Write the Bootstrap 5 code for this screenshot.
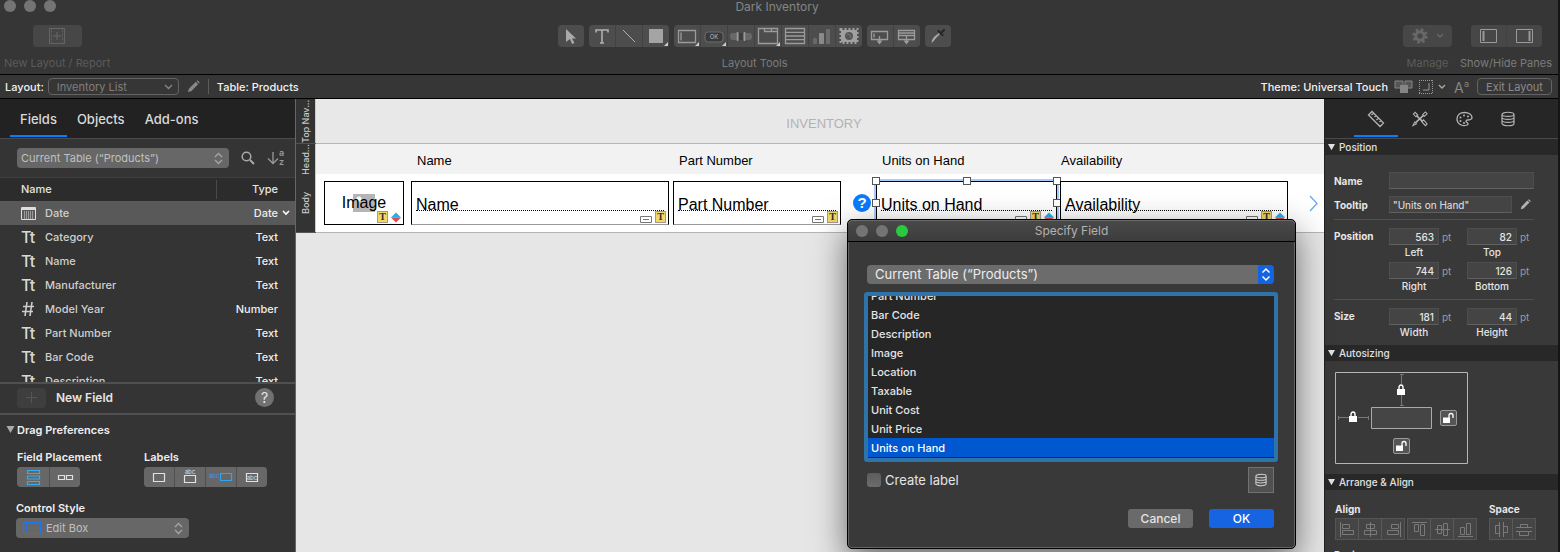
<!DOCTYPE html>
<html lang="en" data-bs-theme="dark">
<head>
<meta charset="utf-8">
<meta name="viewport" content="width=device-width, initial-scale=1">
<title>Dark Inventory</title>
<link href="https://cdn.jsdelivr.net/npm/bootstrap@5.3.0/dist/css/bootstrap.min.css" rel="stylesheet">
<style>
  body { font-family: Inter, "Liberation Sans", sans-serif; font-size: 11px; line-height: 16px; color: #e4e4e4; background: #363636; }
  svg { display: block; flex: none; overflow: visible; }
  button, input, select { font: inherit; color: inherit; }
  button { border: 0; padding: 0; }
  .shell { border-right: 2px solid #151515; }
  .ln { fill: none; stroke: currentColor; }

  /* window toolbar */
  .win-head { background: #363636; border-bottom: 1px solid #000; height: 75px; }
  .win-title { font-size: 12px; height: 13px; line-height: 13px; color: #858585; padding-right: 4px; }
  .dot { width: 12px; height: 12px; border-radius: 50%; background: #747474; }
  .dot.go { background: #29c940; }
  .tool-row { padding: 0 6px 0 4px; }
  .tools { height: 22px; margin-top: 12px; gap: 5px; }
  .seg { display: flex; gap: 1px; border-radius: 4px; overflow: hidden; background: #424242; }
  .seg button { width: 26px; height: 22px; background: #4d4d4d; color: #9b9b9b; display: flex; align-items: center; justify-content: center; }
  .seg .wide { width: 49px; }
  .seg .mid { width: 35px; }
  .tool-name { font-size: 11px; line-height: 16px; margin-top: 8px; color: #7b7b7b; }
  .off { color: #5b5b5b; }
  .seg.dim button { background: #474747; }

  /* layout bar */
  .lay-bar { height: 24px; border-bottom: 1px solid #000; font-weight: 500; color: #f2f2f2; padding: 0 6px 0 5px; }
  .lay-right { gap: 7px; }
  .lay-sel { width: 131px; height: 17px; border: 1px solid #646464; border-radius: 4px; color: #7f7f7f; font-weight: 400; line-height: 14px; padding: 0 20px 0 8px; appearance: none; background: url("data:image/svg+xml,%3Csvg xmlns='http://www.w3.org/2000/svg' width='9' height='6'%3E%3Cpath d='M1 1l3.500 3.500L8 1' fill='none' stroke='%23888' stroke-width='1.300'/%3E%3C/svg%3E") no-repeat right 5px center; }
  .exit { height: 17px; width: 75px; border: 1px solid #646464; border-radius: 4px; background: none; color: #8b8b8b; font-weight: 400; line-height: 14px; }
  .vline { width: 1px; height: 15px; background: #5c5c5c; }
  .pen { color: #888; }
  .pen-lit { color: #b4b4b4; }

  /* panes */
  .pane-l { width: 296px; background: #343434; border-right: 1px solid #666; flex: none; }
  .pane-tabs { height: 40px; background: #222; border-bottom: 1px solid #4a4a4a; }
  .pane-tabs button { background: none; border-bottom: 2px solid transparent; height: 38px; padding: 4px 10px 0; font-size: 13px; font-weight: 500; color: #dadada; }
  .pane-tabs button.active { border-color: #0a7aff; }
  .pane-l .pane-tabs { padding-left: 10px; }
  .find-row { height: 38px; padding-left: 17px; gap: 12px; }
  .mac-sel { appearance: none; border: 0; border-radius: 4px; height: 20px; color: #c0c0c0; padding: 0 20px 0 4px; background: #676767 url("data:image/svg+xml,%3Csvg xmlns='http://www.w3.org/2000/svg' width='9' height='13'%3E%3Cpath d='M1 5l3.500-3.500L8 5M1 8l3.500 3.500L8 8' fill='none' stroke='%23a5a5a5' stroke-width='1.300'/%3E%3C/svg%3E") no-repeat right 6px center; }
  .find-row .mac-sel { width: 212px; }
  .fld-wrap { height: 207px; border-top: 1px solid #3f3f3f; border-bottom: 2px solid #505050; overflow: hidden; }
  .fld { width: 100%; table-layout: fixed; }
  .fld th, .fld td { height: 24px; padding: 0; font-weight: 500; }
  .fld th { height: 23px; padding-bottom: 2px; }
  .fld th:first-child { padding-left: 21px; background: linear-gradient(#4a4a4a, #4a4a4a) no-repeat right center / 1px 19px; }
  .fld td { color: #cfcfcf; }
  .fld td:first-child svg { margin-left: 21px; fill: #d8d8d8; }
  .fld td:nth-child(n+3) { color: #ededed; }
  .fld thead tr { background: #2c2c2c; }
  .fld .sel { background: #595959; }
  .new-row { height: 31px; border-bottom: 2px solid #505050; padding: 0 21px 2px 17px; gap: 10px; }
  .plus { width: 29px; height: 20px; border-radius: 4px; background: #3e3e3e; color: #555; }
  .help { width: 19px; height: 19px; border-radius: 50%; background: #717171; color: #e8e8e8; font-size: 14px; line-height: 19px; }
  .pref { font-weight: 600; color: #efefef; }
  .seg2 { display: flex; gap: 1px; height: 20px; margin-top: 2px; border-radius: 4px; overflow: hidden; background: #505050; }
  .seg2 button { width: 30px; background: #676767; color: #e0e0e0; display: flex; align-items: center; justify-content: center; }
  .edit-sel { width: 173px; padding-left: 30px; }

  /* layout canvas */
  .canvas { background: #e6e6e6; color: #000; font-family: "Liberation Sans", Arial, sans-serif; }
  .part { display: grid; grid-template-columns: 20px minmax(0, 1fr); border-bottom: 1px solid #b5b5b5; }
  .part-tab { background: #333; color: #ccc; font: 500 9px/12px Inter, sans-serif; writing-mode: vertical-rl; transform: rotate(180deg); text-align: center; white-space: nowrap; display: flex; align-items: center; justify-content: center; border-left: 1px solid #ccc; box-shadow: 0 -1px #555; }
  .cols { display: grid; padding-left: 8px; grid-template-columns: minmax(0,80fr) 7px minmax(0,258fr) 4px minmax(0,168fr) 35px minmax(0,181fr) 3px minmax(0,228fr) 36px; }
  .c1 { grid-column: 1; } .c2 { grid-column: 3; } .c3 { grid-column: 5; } .c4 { grid-column: 7; } .c5 { grid-column: 9; }
  .p-nav { height: 45px; } .p-head { height: 30px; } .p-body { height: 59px; }
  .inv { color: #b3b3b3; font-size: 13px; background: #e8e8e8; padding: 6px 0 0 8px; }
  .p-head .cols { background: #f2f2f2; align-items: center; font-size: 13px; padding-top: 3px; }
  .p-head span { padding-left: 6px; }
  .p-head .c5 { padding-left: 1px; }
  .p-body .cols { background: #fff; padding-top: 7px; align-items: start; }
  .box { height: 44px; border: 1px solid #000; position: relative; padding: 14px 4px 0; font-size: 16px; line-height: 18px; }
  .box.c1 { padding-top: 12px; }
  .box.line { border-bottom-color: #999; }
  .box .rule { border-bottom: 1px dotted #000; height: 15px; white-space: nowrap; }
  .photo { position: absolute; left: 28px; top: 12px; }
  .marks { position: absolute; right: 2px; bottom: 1px; display: flex; gap: 3px; align-items: end; }
  .tmark { font: bold 10px/10px "Liberation Serif", serif; width: 11px; height: 12px; background: #f2d868; border: 1px solid #a98; text-align: center; color: #333; }
  .picked { outline: 2px solid #a9ccff; outline-offset: 0; }
  .tip-mark { grid-column: 6; margin: 13px 0 0 12px; }
  .more-mark { grid-column: 10; margin: 14px 0 0 21px; }
  .grip { position: absolute; width: 8px; height: 8px; border: 1px solid #555; background: #fff; }
  .g1 { left: -5px; top: -5px; } .g2 { left: calc(50% - 4px); top: -5px; } .g3 { right: -5px; top: -5px; } .g4 { left: -5px; top: 17px; } .g5 { right: -5px; top: 17px; }

  /* floating dialog */
  .dlg { position: absolute; left: 551px; top: 120px; width: 449px; background: #393939; border: 1px solid #000; border-radius: 5px; box-shadow: inset 0 0 0 1px #646464, 0 12px 34px rgba(0,0,0,.55); color: #e4e4e4; font-family: Inter, "Liberation Sans", sans-serif; }
  .dlg-head { height: 22px; border-bottom: 1px solid #000; border-radius: 5px 5px 0 0; background: linear-gradient(#4a4a4a, #3c3c3c); font-size: 12px; color: #b2b2b2; box-shadow: inset 0 1px #6a6a6a; }
  .dlg-body { padding: 23px 21px 20px 19px; }
  .dlg-sel { width: 100%; height: 19px; font-size: 13px; color: #ececec; padding: 0 24px 1px 8px; background: url("data:image/svg+xml,%3Csvg xmlns='http://www.w3.org/2000/svg' width='16' height='20'%3E%3Cpath fill='%231463e0' d='M0 0h16v20H0z'/%3E%3Cpath d='M4.500 8l3.500-3.500L11.500 8M4.500 12l3.500 3.500 3.500-3.500' fill='none' stroke='%23fff' stroke-width='1.500'/%3E%3C/svg%3E") no-repeat right center, #6c6c6c; }
  .pick { height: 170px; margin: 8px -4px 0 -3px; padding-bottom: 1px; border: 4px solid #2e74aa; border-radius: 3px; background: #262626; overflow: hidden; font-weight: 500; }
  .pick button { height: 19px; flex: none; background: none; text-align: left; padding: 0 3px; }
  .pick button.active { background: #0058d0; color: #fff; }
  .tick { appearance: none; width: 14px; height: 14px; border-radius: 3px; background: linear-gradient(#5c5c5c, #6c6c6c); margin: 0 4px 0 0; }
  .opt-row { padding-top: 5px; font-size: 13px; }
  .act-row { padding-top: 16px; gap: 16px; }
  .lg { font-size: 12px; font-weight: 600; }
  .db { width: 26px; height: 26px; background: #505050; border: 1px solid #727272; color: #d0d0d0; }
  .act { width: 65px; height: 19px; border-radius: 3px; background: #6a6a6a; font-size: 12px; font-weight: 500; line-height: 19px; }
  .act.ok { background: #1664e2; color: #fff; }

  /* inspector */
  .pane-r { width: 234px; background: #393939; flex: none; border-left: 1px solid #222; }
  .pane-r .pane-tabs { padding-left: 29px; background: #262626; }
  .pane-r .pane-tabs button { width: 44px; padding: 4px 0 0; color: #b4b4b4; display: flex; align-items: center; justify-content: center; }
  .sec { height: 16px; background: #282828; padding-left: 3px; gap: 4px; color: #e0e0e0; font-size: 10px; font-weight: 500; }
  .lab { width: 55px; flex: none; font-size: 10px; font-weight: 700; color: #e6e6e6; }
  .in { height: 17px; background: #444; border: 1px solid #4e4e4e; border-bottom-color: #606060; font-size: 10px; line-height: 15px; color: #e4e4e4; padding: 0 4px; border-radius: 0; min-width: 0; }
  .tipbox { width: 123px; padding-left: 3px; }
  .num { width: 50px; text-align: right; }
  .cell { width: 78px; flex: none; font-size: 10px; font-weight: 500; line-height: 14px; }
  .cell label { display: block; width: 50px; text-align: center; }
  .unit { color: #999; margin-left: 3px; font-weight: 400; }
  .insp { padding: 17px 24px 6px 9px; }
  .split { border-top: 1px solid #505050; margin: 6px 0 8px; }
  .auto { padding: 11px 0 10px 10px; }
  .arr { padding: 11px 0 0 10px; }
  .arr-main { width: 154px; }
  .grp { display: flex; gap: 1px; background: #5a5a5a; border: 1px solid #555; }
  .grp button { width: 22px; height: 20px; background: #454545; color: #7a7a7a; display: flex; align-items: center; justify-content: center; }
</style>
</head>
<body>
<svg width="0" height="0" class="position-absolute" aria-hidden="true">
  <symbol id="pencil" viewBox="0 0 14 14"><path d="M1 13l1-3.500L9.500 2 12 4.500 4.500 12zM10.300 1.200l1-1 2.500 2.500-1 1z" fill="currentColor"/></symbol>
  <symbol id="dbase" viewBox="0 0 14 16"><path class="ln" stroke-width="1.200" d="M1 3.500C1 .5 13 .5 13 3.500v9c0 3-12 3-12 0zM1 3.500c0 2.500 12 2.500 12 0M1 6.500c0 2.500 12 2.500 12 0M1 9.500c0 2.500 12 2.500 12 0"/></symbol>
  <symbol id="gem" viewBox="0 0 10 10"><path d="M0 5l5-5 5 5z" fill="#27aee8"/><path d="M0 5l5 5 5-5z" fill="#e0494d"/></symbol>
  <symbol id="fieldmark" viewBox="0 0 12 7"><path d="M.5.5h11v6H.5zM3 3.500h6" fill="#fff" stroke="#777"/></symbol>
  <symbol id="tri" viewBox="0 0 8 8"><path d="M0 0h8L4 7z" fill="currentColor"/></symbol>
  <symbol id="lock" viewBox="0 0 8 12"><path d="M2 6V3.500a2 2.500 0 0 1 4 0V6" fill="none" stroke="#fff" stroke-width="1.400"/><path d="M0 5h8v6H0z" fill="#fff"/></symbol>
  <symbol id="unlock" viewBox="0 0 17 16"><rect x=".5" y=".5" width="16" height="15" rx="1.500" fill="#555" stroke="#999"/><path d="M3 7.500h7V13H3z" fill="#fff"/><path d="M9 8V5.500a2 2 0 0 1 4 0V8" fill="none" stroke="#fff" stroke-width="1.300"/></symbol>
</svg>

<div class="shell vh-100 overflow-hidden d-flex flex-column">
  <header class="win-head flex-shrink-0">
    <div class="win-title position-relative text-center">
      <div class="position-absolute top-0 start-0 d-flex gap-2 ps-1"><span class="dot"></span><span class="dot"></span><span class="dot"></span></div>
      <span>Dark Inventory</span>
    </div>
    <div class="tool-row d-flex justify-content-between">
      <div class="d-flex flex-column align-items-center">
        <div class="tools d-flex"><div class="seg dim"><button aria-label="New layout" class="wide"><svg width="16" height="16"><path d="M.5.500h15v15H.5z" fill="none" stroke="#656565"/><path d="M2.500 1v14M13.500 1v14" stroke="#656565" stroke-dasharray="1 1"/><path d="M8 4v8M4 8h8" stroke="#696969"/></svg></button></div></div>
        <div class="tool-name off">New Layout / Report</div>
      </div>
      <div class="d-flex flex-column align-items-center">
        <div class="tools d-flex">
          <div class="seg"><button aria-label="Select"><svg width="12" height="15"><path d="M1 0l10 9.500H7l2.500 4.500-2.500 1-2-5-4 3z" fill="#aaa"/></svg></button></div>
          <div class="seg">
            <button aria-label="Text"><svg width="14" height="15"><path d="M1 3.500V1h12v2.500M7 1v13M5 14h4" fill="none" stroke="#b0b0b0" stroke-width="1.600"/></svg></button>
            <button aria-label="Line"><svg width="14" height="14"><path d="M1 1l12 12" stroke="#b0b0b0"/></svg></button>
            <button aria-label="Shape"><svg width="24" height="20"><path d="M5 3h14v14H5z" fill="#a4a4a4"/><path d="M24 16v4h-4z" fill="#ccc"/></svg></button>
          </div>
          <div class="seg">
            <button aria-label="Field"><svg width="24" height="20"><path class="ln" stroke-width="1.300" d="M3.500 4.500h17v12h-17zM6 6.500v8"/><path d="M24 16v4h-4z" fill="#ccc"/></svg></button>
            <button aria-label="Button"><svg width="24" height="20"><rect x="3" y="6" width="18" height="10" rx="3" fill="#3a3a3a" stroke="#6c6c6c"/><text x="12" y="13" font-size="6" text-anchor="middle" fill="#bbb">OK</text><path d="M24 16v4h-4z" fill="#ccc"/></svg></button>
            <button aria-label="Button bar"><svg width="24" height="20"><rect x="1" y="7" width="22" height="7" rx="3" fill="#686868"/><path d="M10 7h4v7h-4z" fill="#3e3e3e"/><path d="M8.500 6v9M15.500 6v9" stroke="#999" stroke-width="1.500"/></svg></button>
            <button aria-label="Tab control"><svg width="24" height="20"><path class="ln" stroke-width="1.300" d="M2.500 2.500h19v15h-19zM8.500 2.500v3h13M15.500 2.500v3"/><path d="M24 16v4h-4z" fill="#ccc"/></svg></button>
            <button aria-label="Portal"><svg width="20" height="16"><path class="ln" stroke-width="1.300" d="M.5.500h19v15H.500zM0 4.300h20M0 8h20M0 11.700h20"/></svg></button>
            <button aria-label="Chart"><svg width="18" height="16"><rect x="0" y="10" width="4" height="6" rx="1" fill="#686868"/><rect x="6" y="5" width="5" height="11" rx="1" fill="#8a8a8a"/><rect x="13" y="1" width="4" height="15" rx="1" fill="#6c6c6c"/></svg></button>
            <button aria-label="Web viewer"><svg width="20" height="16"><path d="M2 2h16v12H2z" fill="#a0a0a0"/><path d="M1.500 1h17v14h-17z" fill="none" stroke="#a0a0a0" stroke-width="2" stroke-dasharray="2 2"/><circle cx="10" cy="8" r="4" fill="#565656"/><path d="M8 6l3 1 1 3" stroke="#777" fill="none"/></svg></button>
          </div>
          <div class="seg">
            <button aria-label="Insert field"><svg width="20" height="18"><path class="ln" stroke-width="1.300" d="M1.500 4.500h16v8h-16zM4 6.500v4M9.500 9v7"/><path d="M6.500 13.500h6l-3 4z" fill="currentColor"/></svg></button>
            <button aria-label="Insert part"><svg width="20" height="18"><path class="ln" stroke-width="1.300" d="M1.500 3.500h16v9h-16zM2 6h15M2 8.500h15M9.500 9v7"/><path d="M6.500 13.500h6l-3 4z" fill="currentColor"/></svg></button>
          </div>
          <div class="seg"><button aria-label="Format painter"><svg width="18" height="18"><path d="M2.500 16q.5-4 2.500-6l5-4 1 1-4 4q-2 3-4.500 5" fill="#aaa"/><path d="M9.500 4l4 4M12 6l3-3" stroke="#262626" stroke-width="2.200" stroke-linecap="round" fill="none"/></svg></button></div>
        </div>
        <div class="tool-name">Layout Tools</div>
      </div>
      <div class="d-flex gap-2">
        <div class="d-flex flex-column align-items-center ps-1">
          <div class="tools d-flex"><div class="seg dim"><button class="wide gap-2" aria-label="Manage"><svg width="16" height="16"><circle cx="8" cy="8" r="4.200" fill="none" stroke="#686868" stroke-width="3"/><circle cx="8" cy="8" r="6.500" fill="none" stroke="#686868" stroke-width="2.500" stroke-dasharray="2.600 2.500"/></svg><svg width="8" height="6"><path d="M1 1l3 3 3-3" stroke="#686868" fill="none" stroke-width="1.300"/></svg></button></div></div>
          <div class="tool-name off">Manage</div>
        </div>
        <div class="d-flex flex-column align-items-center">
          <div class="tools d-flex"><div class="seg dim">
            <button class="mid" aria-label="Left pane"><svg width="17" height="14"><path class="ln" d="M.5.500h16v13H.500z"/><path d="M3.500 2v10" stroke="#999" stroke-width="2"/></svg></button>
            <button class="mid" aria-label="Right pane"><svg width="17" height="14"><path class="ln" d="M.5.500h16v13H.500z"/><path d="M13.500 2v10" stroke="#999" stroke-width="2"/></svg></button></div></div>
          <div class="tool-name">Show/Hide Panes</div>
        </div>
      </div>
    </div>
  </header>

  <div class="lay-bar d-flex align-items-center justify-content-between flex-shrink-0">
    <div class="d-flex align-items-center">
      <label for="lay" class="me-1">Layout:</label>
      <select id="lay" class="lay-sel"><option>Inventory List</option></select>
      <svg width="13" height="13" class="ms-2 pen"><use href="#pencil"/></svg>
      <span class="vline mx-2"></span><span>Table: Products</span>
    </div>
    <div class="lay-right d-flex align-items-center">
      <span>Theme: Universal Touch</span>
      <svg width="17" height="13"><path d="M0 1h8v7H0zM10 1h7v7h-7z" fill="#555" stroke="#858585"/><path d="M5 5h8v8H5z" fill="#858585"/></svg>
      <svg width="28" height="14"><path d="M0 .5h14M0 13.500h14M.5 0v14M13.500 0v14" fill="none" stroke="#999" stroke-dasharray="1 1"/><path d="M4 10h6V3" fill="none" stroke="#999"/><path d="M20 5l3 3 3-3" fill="none" stroke="#aaa" stroke-width="1.300"/></svg>
      <svg width="16" height="16"><text x="0" y="14" font-size="14" font-weight="400" fill="#858585">A</text><text x="10" y="8" font-size="9" font-weight="400" fill="#858585">a</text></svg>
      <button class="exit">Exit Layout</button>
    </div>
  </div>

  <div class="d-flex flex-grow-1 overflow-hidden">
    <aside class="pane-l">
      <div class="pane-tabs d-flex">
        <button class="active">Fields</button><button>Objects</button><button>Add-ons</button>
      </div>
      <div class="find-row d-flex align-items-center">
        <select class="mac-sel" aria-label="Table"><option>Current Table (“Products”)</option></select>
        <svg width="14" height="14"><circle cx="5.500" cy="5.500" r="4.300" fill="none" stroke="#aaa" stroke-width="1.500"/><path d="M9 9l4 4" stroke="#aaa" stroke-width="2"/></svg>
        <svg width="20" height="16"><path d="M6 2v11M1 8.500L6 13.500l5-5" fill="none" stroke="#999" stroke-width="1.300"/><text x="12" y="6" font-size="9" font-weight="600" fill="#999">a</text><text x="12" y="15" font-size="9" font-weight="600" fill="#999">z</text></svg>
      </div>
      <div class="fld-wrap">
        <table class="fld">
          <colgroup><col style="width:45px"><col><col style="width:61px"><col style="width:17px"></colgroup>
          <thead><tr><th colspan="2">Name</th><th class="text-end">Type</th><th></th></tr></thead>
          <tbody>
            <tr class="sel"><td><svg width="15" height="13"><path d="M.5.500h14v12H.500z" fill="none" stroke="#ddd"/><path d="M1 2h13" stroke="#ddd" stroke-width="2"/><path d="M3 5h10M3 7h10M3 9h10M3 11h10" stroke="#ddd" stroke-dasharray="1 1"/></svg></td><td>Date</td><td class="text-end">Date</td><td><svg width="8" height="6" class="ms-1"><path d="M1 1l3 3 3-3" fill="none" stroke="#fff" stroke-width="1.600"/></svg></td></tr>
            <tr><td><svg width="16" height="14"><text y="13" font-size="16">Tt</text></svg></td><td>Category</td><td class="text-end">Text</td><td></td></tr>
            <tr><td><svg width="16" height="14"><text y="13" font-size="16">Tt</text></svg></td><td>Name</td><td class="text-end">Text</td><td></td></tr>
            <tr><td><svg width="16" height="14"><text y="13" font-size="16">Tt</text></svg></td><td>Manufacturer</td><td class="text-end">Text</td><td></td></tr>
            <tr><td><svg width="14" height="14"><path d="M6 0L4 14M11 0L9 14M2 4.500h11M1 9.500h11" stroke="#ccc" stroke-width="1.600"/></svg></td><td>Model Year</td><td class="text-end">Number</td><td></td></tr>
            <tr><td><svg width="16" height="14"><text y="13" font-size="16">Tt</text></svg></td><td>Part Number</td><td class="text-end">Text</td><td></td></tr>
            <tr><td><svg width="16" height="14"><text y="13" font-size="16">Tt</text></svg></td><td>Bar Code</td><td class="text-end">Text</td><td></td></tr>
            <tr><td><svg width="16" height="14"><text y="13" font-size="16">Tt</text></svg></td><td>Description</td><td class="text-end">Text</td><td></td></tr>
          </tbody>
        </table>
      </div>
      <div class="new-row d-flex align-items-center">
        <button class="plus d-flex align-items-center justify-content-center" aria-label="Add field"><svg width="11" height="11"><path d="M5.500 0v11M0 5.500h11" stroke="#565656"/></svg></button>
        <span class="lg flex-grow-1">New Field</span>
        <button class="help">?</button>
      </div>
      <div class="pref">
        <div class="d-flex align-items-center" style="padding:7px 0 0 6px;gap:2px"><svg width="9" height="8" style="color:#aaa"><use href="#tri"/></svg>Drag Preferences</div>
        <div class="d-flex" style="padding:11px 0 0 17px">
          <div style="width:127px">Field Placement
            <div class="d-flex"><div class="seg2">
              <button style="width:32px" aria-label="Stacked"><svg width="13" height="15"><path d="M.5.500h12v3H.500zM.5 6h12v3H.500zM.5 11.500h12v3H.500z" fill="none" stroke="#35aef0" stroke-width="1.200"/></svg></button>
              <button aria-label="Side by side"><svg width="15" height="5"><path class="ln" stroke-width="1.200" d="M.5.500h6v4h-6zM8.500.500h6v4h-6z"/></svg></button></div></div>
          </div>
          <div>Labels
            <div class="seg2">
              <button aria-label="No label"><svg width="12" height="9"><path class="ln" stroke-width="1.200" d="M.5.500h11v8H.500z"/></svg></button>
              <button aria-label="Label above"><svg width="14" height="16"><text x="7" y="5" font-size="6" font-weight="400" text-anchor="middle" fill="#ddd">abc</text><path class="ln" stroke-width="1.200" d="M1.500 6.500h11v7h-11z"/></svg></button>
              <button aria-label="Label left"><svg width="22" height="10"><text x="-1" y="6" font-size="6" font-weight="400" fill="#2f9cf8">abc</text><path d="M10.500 1.500h11v7h-11z" fill="none" stroke="#2fa4f2" stroke-width="1.200"/></svg></button>
              <button aria-label="Label inside"><svg width="12" height="9"><path class="ln" stroke-width="1.200" d="M.5.500h11v8H.500z"/><text x="6" y="7" font-size="6" font-weight="400" text-anchor="middle" fill="#ddd">abc</text></svg></button>
            </div>
          </div>
        </div>
        <div style="padding:13px 0 0 16px"><label for="cs">Control Style</label>
          <div class="position-relative" style="margin-top:2px">
            <select id="cs" class="mac-sel edit-sel fw-normal d-block"><option>Edit Box</option></select>
            <svg width="18" height="12" class="position-absolute" style="left:7px;top:4px"><path d="M.5.500h17v11H.500zM3.500 2v8" fill="none" stroke="#2276ea" stroke-width="1.200"/></svg>
          </div>
        </div>
      </div>
    </aside>

    <main class="canvas flex-grow-1 position-relative">
      <section class="part p-nav"><div class="part-tab">Top Nav...</div><div class="inv d-flex align-items-center justify-content-center"><span>INVENTORY</span></div></section>
      <section class="part p-head"><div class="part-tab">Head...</div>
        <div class="cols"><span class="c2">Name</span><span class="c3">Part Number</span><span class="c4">Units on Hand</span><span class="c5">Availability</span></div></section>
      <section class="part p-body"><div class="part-tab">Body</div>
        <div class="cols">
          <div class="box c1 text-center">
            <svg width="22" height="18" class="photo"><path d="M0 0h22v18H0z" fill="#b5b5b5"/><circle cx="6" cy="5" r="2.500" fill="#fff"/></svg>
            <span class="position-relative">Image</span>
            <span class="marks"><span class="tmark">T</span><svg width="10" height="11"><use href="#gem"/></svg></span></div>
          <div class="box line c2"><div class="rule">Name</div><span class="marks"><svg width="12" height="7"><use href="#fieldmark"/></svg><span class="tmark">T</span></span></div>
          <div class="box line c3"><div class="rule">Part Number</div><span class="marks"><svg width="12" height="7"><use href="#fieldmark"/></svg><span class="tmark">T</span></span></div>
          <svg width="18" height="18" class="tip-mark"><circle cx="9" cy="9" r="9" fill="#0a7aff"/><text x="9" y="14" font-size="15" font-weight="700" text-anchor="middle" fill="#fff">?</text></svg>
          <div class="box line picked c4"><div class="rule">Units on Hand</div><span class="marks"><svg width="12" height="7"><use href="#fieldmark"/></svg><span class="tmark">T</span><svg width="10" height="11"><use href="#gem"/></svg></span>
            <i class="grip g1"></i><i class="grip g2"></i><i class="grip g3"></i><i class="grip g4"></i><i class="grip g5"></i></div>
          <div class="box line c5"><div class="rule">Availability</div><span class="marks"><svg width="12" height="7"><use href="#fieldmark"/></svg><span class="tmark">T</span><svg width="10" height="11"><use href="#gem"/></svg></span></div>
          <svg width="9" height="17" class="more-mark"><path d="M1 1l7 7.500L1 16" fill="none" stroke="#6da6f5" stroke-width="1.300"/></svg>
        </div></section>

      <div class="dlg" role="dialog" aria-label="Specify Field">
        <div class="dlg-head position-relative d-flex align-items-center justify-content-center">
          <div class="position-absolute start-0 d-flex gap-2 ps-2"><span class="dot"></span><span class="dot"></span><span class="dot go"></span></div>
          Specify Field
        </div>
        <div class="dlg-body">
          <select class="mac-sel dlg-sel d-block" aria-label="Table"><option>Current Table (“Products”)</option></select>
          <div class="pick d-flex flex-column justify-content-end">
            <button>Part Number</button><button>Bar Code</button><button>Description</button><button>Image</button><button>Location</button><button>Taxable</button><button>Unit Cost</button><button>Unit Price</button><button class="active">Units on Hand</button>
          </div>
          <div class="opt-row d-flex align-items-center justify-content-between">
            <label class="d-flex align-items-center"><input type="checkbox" class="tick">Create label</label>
            <button class="db d-flex align-items-center justify-content-center" aria-label="Manage database"><svg width="12" height="14"><use href="#dbase"/></svg></button>
          </div>
          <div class="act-row d-flex justify-content-end"><button class="act">Cancel</button><button class="act ok">OK</button></div>
        </div>
      </div>
    </main>

    <aside class="pane-r">
      <div class="pane-tabs d-flex">
        <button class="active" aria-label="Position"><svg width="18" height="18"><path class="ln" stroke-width="1.300" d="M1.500 5L5 1.500 16.500 13 13 16.500zM6.500 3l-2 2M9 5.500L7.500 7M11.500 8l-2 2M14 10.500L12.500 12"/></svg></button>
        <button aria-label="Styles"><svg width="16" height="16" viewBox="0 0 18 18"><path class="ln" stroke-width="1.800" d="M5 5l7 7M13 5l-9 8"/><path class="ln" stroke-width="1.200" d="M1.500 3.500l2-2 3 3-2 2zM11 12l2-2 4 4.500-2 2zM12 4l3-3 2 2-3 3zM1 16.500l2-4 2 2z"/></svg></button>
        <button aria-label="Appearance"><svg width="17" height="16"><path class="ln" stroke-width="1.300" d="M11 9q-2 1 0 2.500t0 2.500C5 16 1 12 1 8s3-6.500 7.500-6.500S16 4 16 6.500 13 9 11 9z"/><path class="ln" stroke-width="2" stroke-linecap="round" d="M4.500 6.500h0M8 4.500h0M12 5.500h0M4.500 10h0M8 12h0"/></svg></button>
        <button aria-label="Data"><svg width="14" height="16"><use href="#dbase"/></svg></button>
      </div>
      <div class="sec d-flex align-items-center"><svg width="7" height="7"><use href="#tri"/></svg>Position</div>
      <div class="insp">
        <div class="d-flex align-items-center"><label for="nm" class="lab">Name</label><input id="nm" class="in flex-grow-1"></div>
        <div class="d-flex align-items-center" style="margin-top:7px"><label for="tip" class="lab">Tooltip</label><input id="tip" class="in tipbox" value="&quot;Units on Hand&quot;"><svg width="11" height="11" class="pen-lit ms-2"><use href="#pencil"/></svg></div>
        <div class="split"></div>
        <div class="d-flex"><span class="lab">Position</span>
          <div class="cell"><input id="pl" class="in num" value="563"><span class="unit">pt</span><label for="pl">Left</label></div>
          <div class="cell"><input id="ptop" class="in num" value="82"><span class="unit">pt</span><label for="ptop">Top</label></div></div>
        <div class="d-flex" style="margin-top:3px"><span class="lab"></span>
          <div class="cell"><input id="pr" class="in num" value="744"><span class="unit">pt</span><label for="pr">Right</label></div>
          <div class="cell"><input id="pb" class="in num" value="126"><span class="unit">pt</span><label for="pb">Bottom</label></div></div>
        <div class="split"></div>
        <div class="d-flex"><span class="lab">Size</span>
          <div class="cell"><input id="sw" class="in num" value="181"><span class="unit">pt</span><label for="sw">Width</label></div>
          <div class="cell"><input id="sh" class="in num" value="44"><span class="unit">pt</span><label for="sh">Height</label></div></div>
      </div>
      <div class="sec d-flex align-items-center"><svg width="7" height="7"><use href="#tri"/></svg>Autosizing</div>
      <div class="auto">
        <svg width="133" height="92">
          <path d="M.5.500h132v91H.500z" fill="none" stroke="#b5b5b5"/><path d="M36.500 35.500h60v21h-60z" fill="#454545" stroke="#aaa"/>
          <path d="M66.500 2v10M66.500 23v11M65 2.500h4M65 33.500h4M3 45.500h11M23 45.500h11M3.500 44v4M33.500 44v4" stroke="#777"/>
          <svg x="62" y="12" width="8" height="12"><use href="#lock"/></svg><svg x="14" y="39" width="8" height="12"><use href="#lock"/></svg>
          <svg x="105" y="38" width="17" height="16"><use href="#unlock"/></svg><svg x="58" y="66" width="17" height="16"><use href="#unlock"/></svg>
        </svg>
      </div>
      <div class="sec d-flex align-items-center"><svg width="7" height="7"><use href="#tri"/></svg>Arrange &amp; Align</div>
      <div class="arr d-flex">
        <div class="arr-main"><span class="lab">Align</span>
          <div class="d-flex" style="gap:2px;margin-top:1px">
            <div class="grp">
              <button aria-label="Align left"><svg width="15" height="15"><path class="ln" d="M.5 0v15M2.500 2.500h7v4h-7zM2.500 8.500h11v4h-11z"/></svg></button>
              <button aria-label="Align center"><svg width="15" height="15"><path class="ln" d="M7.500 0v15M3.500 2.500h8v4h-8zM1.500 8.500h12v4h-12z"/></svg></button>
              <button aria-label="Align right"><svg width="15" height="15"><path class="ln" d="M14.500 0v15M5.500 2.500h7v4h-7zM1.500 8.500h11v4h-11z"/></svg></button></div>
            <div class="grp">
              <button aria-label="Align top"><svg width="15" height="15"><path class="ln" d="M0 .5h15M2.500 2.500h4v7h-4zM8.500 2.500h4v11h-4z"/></svg></button>
              <button aria-label="Align middle"><svg width="15" height="15"><path class="ln" d="M0 7.500h15M2.500 3.500h4v8h-4zM8.500 1.500h4v12h-4z"/></svg></button>
              <button aria-label="Align bottom"><svg width="15" height="15"><path class="ln" d="M0 14.500h15M2.500 5.500h4v7h-4zM8.500 1.500h4v11h-4z"/></svg></button></div>
          </div></div>
        <div><span class="lab">Space</span>
          <div class="grp" style="margin-top:1px">
            <button aria-label="Space across"><svg width="15" height="15"><path class="ln" d="M5.500 0v15M9.500 0v15M1.500 3.500h4v8h-4zM9.500 4.500h4v6h-4z"/></svg></button>
            <button aria-label="Space down"><svg width="16" height="15"><path class="ln" d="M0 5.500h16M0 9.500h16M4.500 2.500h7v3h-7zM3.500 9.500h9v4h-9z"/></svg></button></div></div>
      </div>
      <div class="lab" style="margin:7px 0 0 9px">Resize</div>
    </aside>
  </div>
</div>
<script src="https://cdn.jsdelivr.net/npm/bootstrap@5.3.0/dist/js/bootstrap.bundle.min.js"></script>
</body>
</html>
